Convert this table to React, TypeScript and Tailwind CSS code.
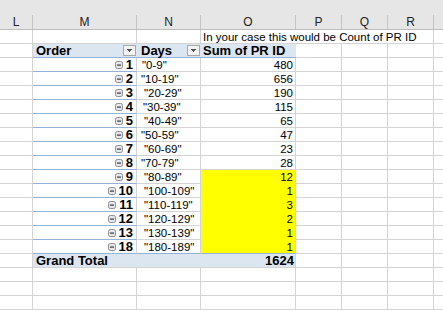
import React from "react";

const GRID = "border-[#d4d4d4]";
const BLUE_LINE = "border-b-[#95b3d7]";

const rows: { o: string; d: string; v: string; ind: string; y?: boolean }[] = [
  { o: "1", d: '"0-9"', v: "480", ind: "pl-[5px]" },
  { o: "2", d: '"10-19"', v: "656", ind: "pl-[4px]" },
  { o: "3", d: '"20-29"', v: "190", ind: "pl-[7px]" },
  { o: "4", d: '"30-39"', v: "115", ind: "pl-[6px]" },
  { o: "5", d: '"40-49"', v: "65", ind: "pl-[7px]" },
  { o: "6", d: '"50-59"', v: "47", ind: "pl-[4px]" },
  { o: "7", d: '"60-69"', v: "23", ind: "pl-[7px]" },
  { o: "8", d: '"70-79"', v: "28", ind: "pl-[4px]" },
  { o: "9", d: '"80-89"', v: "12", ind: "pl-[7px]", y: true },
  { o: "10", d: '"100-109"', v: "1", ind: "pl-[7px]", y: true },
  { o: "11", d: '"110-119"', v: "3", ind: "pl-[7px]", y: true },
  { o: "12", d: '"120-129"', v: "2", ind: "pl-[7px]", y: true },
  { o: "13", d: '"130-139"', v: "1", ind: "pl-[7px]", y: true },
  { o: "18", d: '"180-189"', v: "1", ind: "pl-[7px]", y: true },
];

function Minus() {
  return (
    <svg width="8" height="8" viewBox="0 0 8 8" className="shrink-0">
      <rect x="0.5" y="0.5" width="7" height="7" rx="1.8" fill="#e4e8ee" stroke="#8d8d8d" />
      <rect x="2" y="3.5" width="4" height="1.2" fill="#3a3a3a" />
    </svg>
  );
}

function Drop() {
  return (
    <div className="w-[13px] h-[11px] shrink-0 border border-[#a8a8a8] bg-[#f4f4f4] flex items-center justify-center">
      <svg width="7" height="5" viewBox="0 0 7 5">
        <rect x="1" y="1" width="5" height="1" fill="#555" />
        <rect x="2" y="2" width="3" height="1" fill="#555" />
        <rect x="3" y="3" width="1" height="1" fill="#555" />
      </svg>
    </div>
  );
}

function Empty({ w, noRight }: { w: string; noRight?: boolean }) {
  return <div className={`${w} h-[14px] shrink-0 border-b ${noRight ? "" : "border-r"} ${GRID}`} />;
}

function Tail() {
  return (
    <>
      <Empty w="w-[46px]" />
      <Empty w="w-[46px]" />
      <Empty w="w-[46px]" />
      <Empty w="w-[9px]" noRight />
    </>
  );
}

export default function App() {
  const font = { fontFamily: '"Liberation Sans", Arial, sans-serif' };
  return (
    <div className="w-[443px] h-[311px] bg-white overflow-hidden text-black" style={font}>
      {/* column headers */}
      <div className="h-[30px] bg-[#e6e6e6] border-b border-[#bdbdbd] flex flex-col">
        <div className="h-[15px]" />
        <div className="flex h-[14px] text-[12px] leading-[14px] text-[#222]">
          {[
            ["L", "w-[33px]"],
            ["M", "w-[104px]"],
            ["N", "w-[64px]"],
            ["O", "w-[95px]"],
            ["P", "w-[46px]"],
            ["Q", "w-[46px]"],
            ["R", "w-[46px]"],
          ].map(([l, w]) => (
            <div key={l} className={`${w} shrink-0 border-r border-[#c4c4c4] text-center`}>
              {l}
            </div>
          ))}
          <div className="w-[9px] shrink-0" />
        </div>
      </div>

      {/* row 1: note */}
      <div className="flex h-[14px] text-[11.5px] leading-[14px]">
        <Empty w="w-[33px]" />
        <Empty w="w-[104px]" />
        <Empty w="w-[64px]" />
        <div className={`w-[233px] h-[14px] shrink-0 border-r border-b ${GRID} pl-[2px] whitespace-nowrap`}>
          In your case this would be Count of PR ID
        </div>
        <Empty w="w-[9px]" noRight />
      </div>

      {/* pivot header */}
      <div className="flex h-[14px] leading-[14px]">
        <Empty w="w-[33px]" />
        <div className={`w-[263px] h-[14px] shrink-0 flex bg-[#dce6f1] border-b border-[#95b3d7] text-[13px] font-bold`}>
          <div className="w-[104px] shrink-0 flex items-center justify-between pl-[3px] pr-[1px]">
            <span>Order</span>
            <Drop />
          </div>
          <div className="w-[64px] shrink-0 flex items-center justify-between pl-[4px] pr-[1px]">
            <span>Days</span>
            <Drop />
          </div>
          <div className="w-[95px] shrink-0 pl-[2px]">Sum of PR ID</div>
        </div>
        <Tail />
      </div>

      {/* data rows */}
      {rows.map((r, i) => {
        const last = i === rows.length - 1;
        return (
          <div key={r.o} className="flex h-[14px] leading-[14px]">
            <Empty w="w-[33px]" />
            <div
              className={`w-[104px] h-[14px] shrink-0 border-r border-b ${GRID} ${BLUE_LINE} flex items-center justify-end gap-[3px] pr-[3px] text-[13px] font-bold`}
            >
              <Minus />
              <span>{r.o}</span>
            </div>
            <div
              className={`w-[64px] h-[14px] shrink-0 border-r border-b ${GRID} ${last ? BLUE_LINE : ""} ${r.ind} text-[11.5px] whitespace-nowrap`}
            >
              {r.d}
            </div>
            <div
              className={`w-[95px] h-[14px] shrink-0 border-r border-b ${GRID} ${
                last ? BLUE_LINE : r.y ? "border-b-[#ffff00]" : ""
              } ${r.y ? "bg-[#ffff00]" : ""} text-right pr-[2px] text-[11.5px]`}
            >
              {r.v}
            </div>
            <Tail />
          </div>
        );
      })}

      {/* grand total */}
      <div className="flex h-[14px] leading-[14px]">
        <Empty w="w-[33px]" />
        <div className={`w-[263px] h-[14px] shrink-0 flex bg-[#dce6f1] border-b border-r ${GRID} text-[13px] font-bold`}>
          <div className="w-[168px] shrink-0 pl-[3px]">Grand Total</div>
          <div className="w-[95px] shrink-0 text-right pr-[2px]">1624</div>
        </div>
        <Tail />
      </div>

      {/* empty rows */}
      {[0, 1, 2].map((k) => (
        <div key={k} className="flex h-[14px]">
          <Empty w="w-[33px]" />
          <Empty w="w-[104px]" />
          <Empty w="w-[64px]" />
          <Empty w="w-[95px]" />
          <Tail />
        </div>
      ))}
    </div>
  );
}
